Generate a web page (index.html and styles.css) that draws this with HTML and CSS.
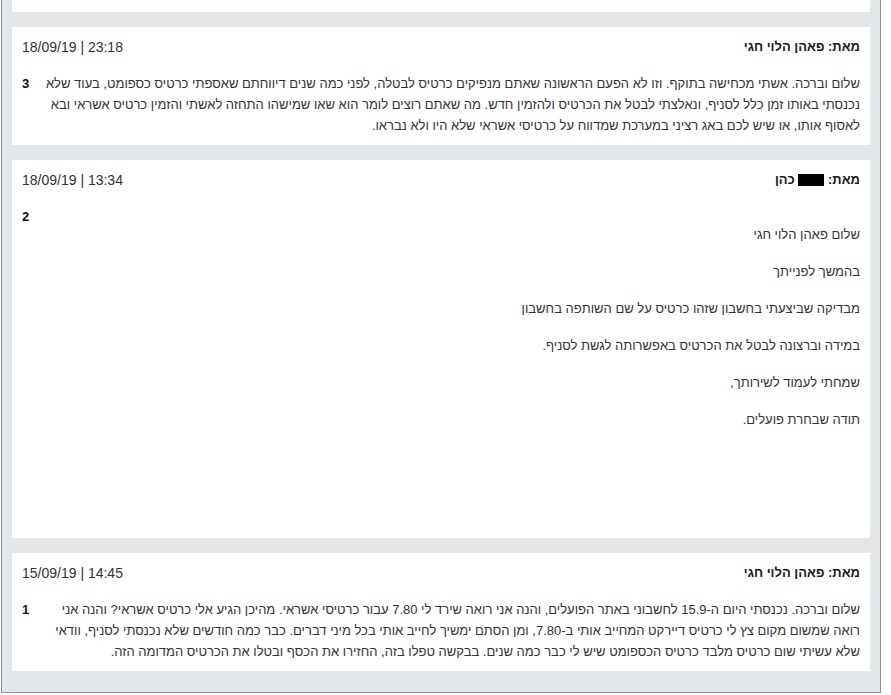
FILE: index.html
```html
<!DOCTYPE html>
<html lang="he" dir="rtl">
<head>
<meta charset="utf-8">
<title>פניות</title>
<link rel="stylesheet" href="styles.css">
</head>
<body>
<div class="frame">
  <div class="card card-cut"></div>

  <div class="card">
    <div class="head">
      <div class="from">מאת: פאהן הלוי חגי</div>
      <div class="date" dir="ltr">18/09/19 | 23:18</div>
    </div>
    <div class="body">
      <div class="text">שלום וברכה. אשתי מכחישה בתוקף. וזו לא הפעם הראשונה שאתם מנפיקים כרטיס לבטלה, לפני כמה שנים דיווחתם שאספתי כרטיס כספומט, בעוד שלא נכנסתי באותו זמן כלל לסניף, ונאלצתי לבטל את הכרטיס ולהזמין חדש. מה שאתם רוצים לומר הוא שאו שמישהו התחזה לאשתי והזמין כרטיס אשראי ובא לאסוף אותו, או שיש לכם באג רציני במערכת שמדווח על כרטיסי אשראי שלא היו ולא נבראו.</div>
      <div class="num">3</div>
    </div>
  </div>

  <div class="card">
    <div class="head">
      <div class="from">מאת: <span class="redact"></span> כהן</div>
      <div class="date" dir="ltr">18/09/19 | 13:34</div>
    </div>
    <div class="body">
      <div class="text text-reply">
        <p>שלום פאהן הלוי חגי</p>
        <p>בהמשך לפנייתך</p>
        <p>מבדיקה שביצעתי בחשבון שזהו כרטיס על שם השותפה בחשבון</p>
        <p>במידה וברצונה לבטל את הכרטיס באפשרותה לגשת לסניף.</p>
        <p>שמחתי לעמוד לשירותך,</p>
        <p>תודה שבחרת פועלים.</p>
      </div>
      <div class="num">2</div>
    </div>
  </div>

  <div class="card">
    <div class="head">
      <div class="from">מאת: פאהן הלוי חגי</div>
      <div class="date" dir="ltr">15/09/19 | 14:45</div>
    </div>
    <div class="body">
      <div class="text">שלום וברכה. נכנסתי היום ה-15.9 לחשבוני באתר הפועלים, והנה אני רואה שירד לי 7.80 עבור כרטיסי אשראי. מהיכן הגיע אלי כרטיס אשראי? והנה אני רואה שמשום מקום צץ לי כרטיס דיירקט המחייב אותי ב-7.80, ומן הסתם ימשיך לחייב אותי בכל מיני דברים. כבר כמה חודשים שלא נכנסתי לסניף, וודאי שלא עשיתי שום כרטיס מלבד כרטיס הכספומט שיש לי כבר כמה שנים. בבקשה טפלו בזה, החזירו את הכסף ובטלו את הכרטיס המדומה הזה.</div>
      <div class="num">1</div>
    </div>
  </div>
</div>
</body>
</html>
```

FILE: styles.css
```css
html, body {
  margin: 0;
  padding: 0;
  background: #ffffff;
}

body {
  font-family: "Liberation Sans", Arial, sans-serif;
  font-size: 13px;
  color: #333333;
}

.frame {
  width: 880px;
  box-sizing: border-box;
  margin: 0 auto 0 1px;
  background: #e4e7ea;
  border-left: 1px solid #8a92a2;
  border-right: 1px solid #8a92a2;
  border-bottom: 1px solid #8a92a2;
  padding: 0 10px 21px;
  display: flex;
  flex-direction: column;
  gap: 15px;
}

.card {
  background: #ffffff;
  padding: 11px 10px 9px;
}

.card-cut {
  height: 12px;
  padding: 0;
}

.head {
  display: flex;
  justify-content: space-between;
  align-items: center;
  line-height: 18px;
  margin-bottom: 17px;
}

.from {
  font-weight: bold;
  color: #1a1a1a;
}

.redact {
  display: inline-block;
  width: 26px;
  height: 12px;
  background: #000000;
  vertical-align: -2px;
}

.date {
  font-size: 14px;
  color: #333333;
}

.body {
  display: flex;
  line-height: 21px;
}

.text {
  flex: 1;
}

.text-reply {
  display: flow-root;
  padding-top: 2px;
  padding-bottom: 83px;
}

.text-reply p {
  margin: 16px 0;
}

.num {
  width: 22px;
  flex: none;
  font-weight: bold;
  color: #111111;
  text-align: left;
}
```
